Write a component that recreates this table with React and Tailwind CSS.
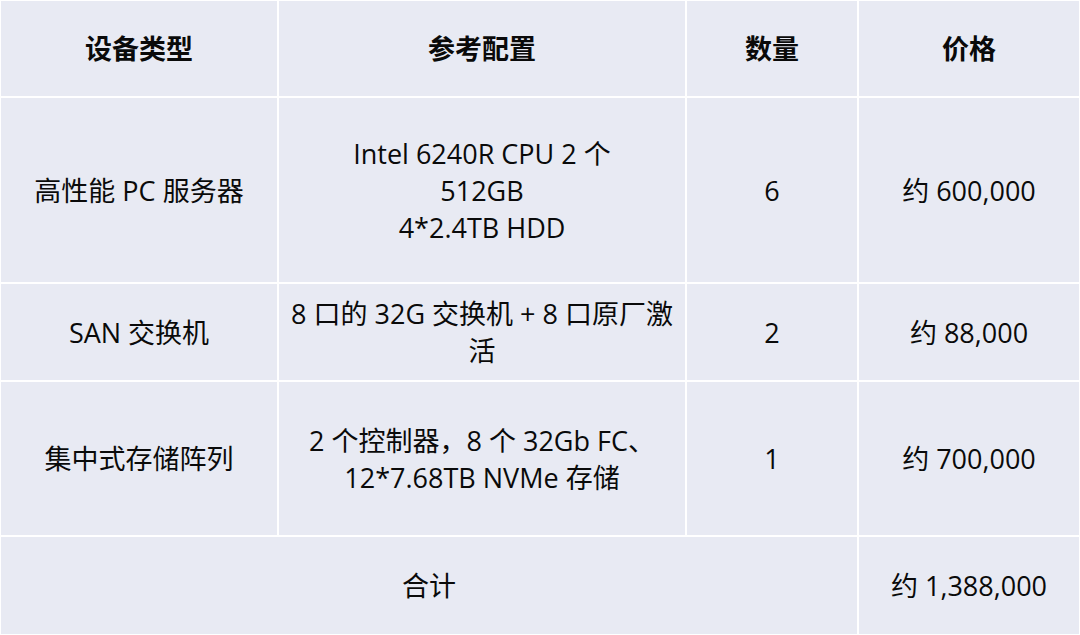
const rows = [
  {
    type: '高性能 PC 服务器',
    spec: ['Intel 6240R CPU 2 个', '512GB', '4*2.4TB HDD'],
    qty: '6',
    price: '约 600,000',
  },
  {
    type: 'SAN 交换机',
    spec: ['8 口的 32G 交换机 + 8 口原厂激', '活'],
    qty: '2',
    price: '约 88,000',
  },
  {
    type: '集中式存储阵列',
    spec: ['2 个控制器，8 个 32Gb FC、', '12*7.68TB NVMe 存储'],
    qty: '1',
    price: '约 700,000',
  },
];

const cell = 'bg-[#e8eaf3] flex items-center justify-center text-center';

export default function App() {
  return (
    <div
      className="w-[1080px] h-[635px] bg-white p-px grid gap-[2px] grid-cols-[276px_406px_170px_220px] grid-rows-[95px_184px_96px_153px_97px] text-[#0a0a0a] text-[27px] leading-[37px] whitespace-nowrap"
      style={{ fontFamily: '"Open Sans", "Noto Sans CJK SC", sans-serif' }}
    >
      {/* header */}
      {['设备类型', '参考配置', '数量', '价格'].map(h => (
        <div key={h} className={`${cell} font-bold text-[27px]`}>{h}</div>
      ))}

      {rows.map(r => (
        <div key={r.type} className="contents">
          <div className={cell}>{r.type}</div>
          <div className={`${cell} flex-col`}>
            {r.spec.map(line => (
              <span key={line}>{line}</span>
            ))}
          </div>
          <div className={cell}>{r.qty}</div>
          <div className={cell}>{r.price}</div>
        </div>
      ))}

      {/* total */}
      <div className={`${cell} col-span-3`}>合计</div>
      <div className={cell}>约 1,388,000</div>
    </div>
  );
}
